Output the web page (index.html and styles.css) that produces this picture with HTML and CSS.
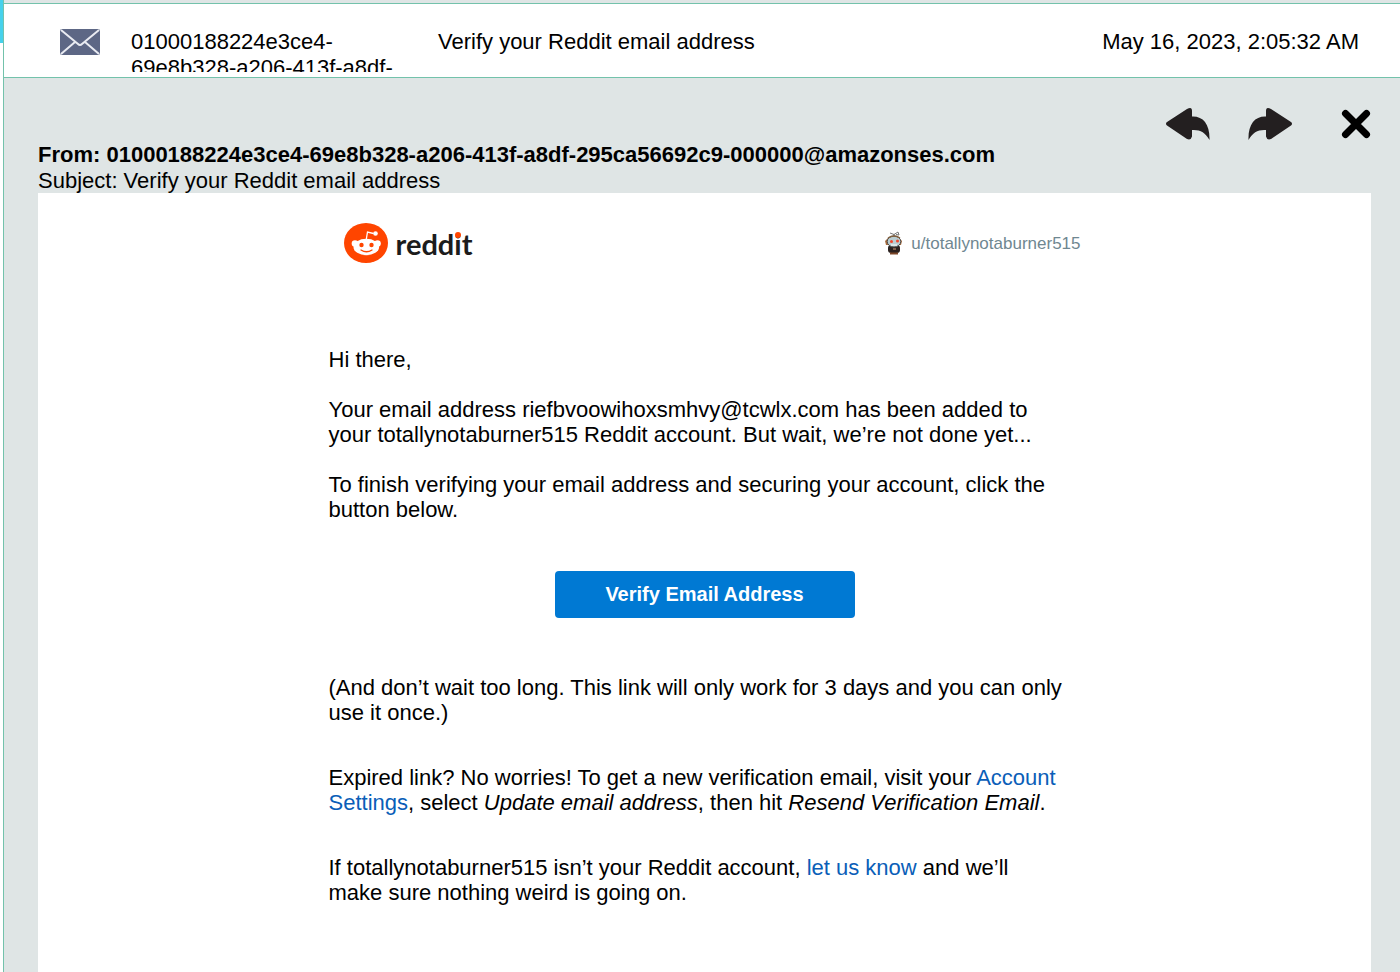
FILE: index.html
```html
<!DOCTYPE html>
<html lang="en">
  <head>
    <meta charset="utf-8">
    <title>Verify your Reddit email address</title>
    <link rel="stylesheet" href="styles.css">
  </head>
  <body>
    <div class="rail"><div class="rail-thumb"></div></div>

    <main class="inbox">
      <div class="row">
        <svg class="envelope" viewBox="0 0 40 26" aria-hidden="true">
          <rect width="40" height="26" rx="2" fill="#5d6785" />
          <path d="M1 1l17 14q2 2 4 0L39 1M1 25l14-12M39 25L25 13" fill="none" stroke="#e9ebf2" stroke-width="2" />
        </svg>
        <div class="row-from">01000188224e3ce4-<br>69e8b328-a206-413f-a8df-</div>
        <div class="row-subject">Verify your Reddit email address</div>
        <div class="row-date">May 16, 2023, 2:05:32 AM</div>
      </div>

      <section class="message">
        <div class="actions">
          <button type="button" aria-label="Reply">
            <svg width="46" height="34" viewBox="0 0 46 34">
              <path d="M2 15L22 2Q27-1 27 4v5.500C38 9 45 17 44.500 33 40 25 35 22.500 27 23v6.500q-1 4-5 2.500L2 18.500q-2-2 0-3.500z" />
            </svg>
          </button>
          <button type="button" aria-label="Forward">
            <svg width="46" height="34" viewBox="0 0 46 34">
              <path d="M44 15L24 2Q19-1 19 4v5.500C8 9 1 17 1.500 33 6 25 11 22.500 19 23v6.500q1 4 5 2.500L44 18.500q2-2 0-3.500z" />
            </svg>
          </button>
          <button type="button" class="close" aria-label="Close">
            <svg width="30" height="30" viewBox="0 0 30 30">
              <path d="M4.500 4.500l21 21M25.500 4.500l-21 21" fill="none" stroke="#000" stroke-width="7" stroke-linecap="round" />
            </svg>
          </button>
        </div>
        <h1>From: 01000188224e3ce4-69e8b328-a206-413f-a8df-295ca56692c9-000000@amazonses.com</h1>
        <div class="subject">Subject: Verify your Reddit email address</div>

        <article class="mail">
          <header class="mail-header">
            <svg class="snoo" viewBox="0 0 44 40" aria-hidden="true">
              <ellipse cx="22" cy="20" rx="22" ry="20" fill="#ff4500" />
              <path d="M22 18l1.500-9 6 1.500" fill="none" stroke="#fff" stroke-width="1.300" />
              <circle cx="31.500" cy="10.500" r="2.300" fill="#fff" />
              <circle cx="11" cy="20.500" r="3.300" fill="#fff" />
              <circle cx="33.500" cy="20.500" r="3.300" fill="#fff" />
              <ellipse cx="22.300" cy="24" rx="12.800" ry="8.300" fill="#fff" />
              <circle cx="17.500" cy="22" r="2.200" fill="#ff4500" />
              <circle cx="27.500" cy="22" r="2.200" fill="#ff4500" />
              <path d="M17 27q5.500 3.500 11 0" fill="none" stroke="#ff4500" stroke-width="1.300" stroke-linecap="round" />
            </svg>
            <span class="wordmark">redd<span class="dotted">i</span>t</span>
            <span class="user">
              <svg width="19" height="24" viewBox="0 0 19 24" aria-hidden="true">
                <path d="M10 6V3M6 2l4 1.500L14 1l1 3-3-.5" fill="none" stroke="#777" stroke-width="1" />
                <rect x="4" y="14" width="12" height="8" rx="3" fill="#2b211f" />
                <path d="M1 10l3-3v7H2zM16 8l2 2-1 4h-2z" fill="#a66b3d" />
                <ellipse cx="10" cy="10.500" rx="6.800" ry="5.500" fill="#b9cdd2" stroke="#4e4a48" />
                <path d="M4 7q6-4 12 0" fill="none" stroke="#80603f" stroke-width="1.500" />
                <circle cx="7.500" cy="10.500" r="1.500" fill="#f0462d" />
                <circle cx="13.500" cy="10" r="1.500" fill="#f0462d" />
                <path d="M7 14h6" stroke="#fff" />
                <path d="M6 22.500h8" stroke="#7b4527" stroke-width="2" />
                <path d="M9 17h3v2H9z" fill="#80604d" />
              </svg>
              u/totallynotaburner515
            </span>
          </header>

          <div class="mail-body">
            <p>Hi there,</p>
            <p>Your email address riefbvoowihoxsmhvy@tcwlx.com has been added to<br>
              your totallynotaburner515 Reddit account. But wait, we’re not done yet...</p>
            <p>To finish verifying your email address and securing your account, click the<br>
              button below.</p>
            <button type="button" class="verify">Verify Email Address</button>
            <p class="spaced">(And don’t wait too long. This link will only work for 3 days and you can only<br>
              use it once.)</p>
            <p class="spaced">Expired link? No worries! To get a new verification email, visit your <a href="#">Account<br>
              Settings</a>, select <em>Update email address</em>, then hit <em>Resend Verification Email</em>.</p>
            <p class="spaced">If totallynotaburner515 isn’t your Reddit account, <a href="#">let us know</a> and we’ll<br>
              make sure nothing weird is going on.</p>
          </div>
        </article>
      </section>
    </main>
  </body>
</html>
```

FILE: styles.css
```css
* {
    box-sizing: border-box;
}
body {
    background: #dfe5e5;
    color: #000;
    display: flex;
    font-family: "Liberation Sans", Arial, sans-serif;
    font-size: 22px;
    line-height: 25px;
    margin: 0;
    min-height: 100vh;
}
button {
    border: 0;
    cursor: pointer;
    font-family: inherit;
    padding: 0;
}
a {
    color: #0a5eb8;
    text-decoration: none;
}
.rail {
    background: #fff;
    width: 3px;
}
.rail-thumb {
    background: #46d1ec;
    height: 43px;
}
.inbox {
    border-left: 1px solid #73c2ab;
    display: flex;
    flex: 1;
    flex-direction: column;
    min-width: 0;
    padding-top: 3px;
}

/* message list */
.row {
    background: #fff;
    border-bottom: 1px solid #73c2ab;
    border-top: 1px solid #73c2ab;
    display: grid;
    grid-template-columns: 71px 307px 1fr auto;
    height: 75px;
    line-height: 26px;
    padding: 25px 41px 0 56px;
}
.envelope {
    height: 26px;
    width: 40px;
}
.row-from {
    height: 43px;
    overflow: hidden;
}

/* opened message */
.message {
    display: flex;
    flex: 1;
    flex-direction: column;
    padding: 28px 29px 0 34px;
}
.actions {
    align-items: center;
    display: flex;
    gap: 36px;
    height: 36px;
    justify-content: flex-end;
}
.actions button {
    background: none;
    display: flex;
}
.actions svg {
    fill: #231f20;
}
.actions .close {
    margin-left: 12px;
}
h1 {
    font-size: 22px;
    line-height: 26px;
    margin: 0;
}
.subject {
    line-height: 25px;
}
.mail {
    background: #fff;
    flex: 1;
    padding: 30px 0 66px;
}
.mail-header {
    align-items: center;
    display: flex;
    margin: 0 auto;
    padding-left: 15px;
    width: 752px;
}
.snoo {
    height: 40px;
    width: 44px;
}
.wordmark {
    color: #1c1c1c;
    font-family: Lato, sans-serif;
    font-size: 29px;
    font-weight: bold;
    margin-left: 8px;
}
.dotted {
    position: relative;
}
.dotted::before {
    background: #ff4500;
    border-radius: 50%;
    content: "";
    height: 6px;
    left: 1px;
    position: absolute;
    top: 6px;
    width: 6px;
}
.user {
    align-items: center;
    color: #6f8791;
    display: flex;
    font-size: 17px;
    gap: 8px;
    margin-left: auto;
}
.mail-body {
    margin: 84px auto 0;
    width: 752px;
}
p {
    margin: 0 0 25px;
}
.spaced {
    margin-bottom: 40px;
}
.verify {
    background: #0079d3;
    border-radius: 4px;
    color: #fff;
    display: block;
    font-size: 20px;
    font-weight: bold;
    height: 47px;
    margin: 49px auto 57px;
    width: 300px;
}
```
